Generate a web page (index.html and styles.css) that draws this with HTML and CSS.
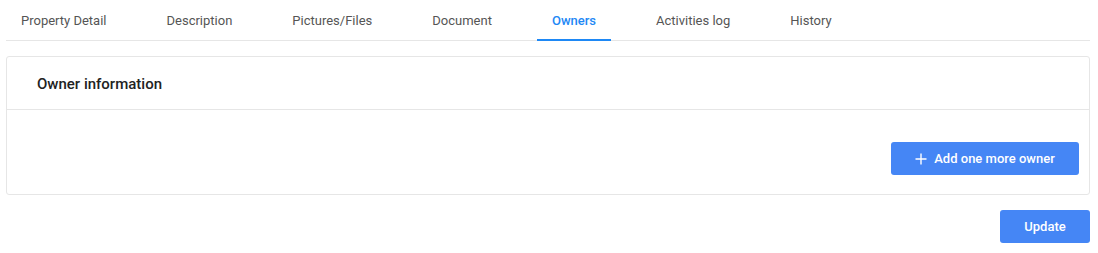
FILE: index.html
```html
<!DOCTYPE html>
<html>
<head>
<meta charset="utf-8">
<link rel="stylesheet" href="styles.css">
</head>
<body>
<div class="page">
  <nav class="tabs">
    <div class="tab">Property Detail</div>
    <div class="tab">Description</div>
    <div class="tab">Pictures/Files</div>
    <div class="tab">Document</div>
    <div class="tab active">Owners</div>
    <div class="tab">Activities log</div>
    <div class="tab">History</div>
  </nav>
  <section class="card">
    <div class="card-head">Owner information</div>
    <div class="card-body">
      <button class="btn btn-add"><svg class="plus" width="12" height="12" viewBox="0 0 12 12"><path d="M6 0.5V11.5M0.5 6H11.5" stroke="#fff" stroke-width="1.4" fill="none"/></svg>Add one more owner</button>
    </div>
  </section>
  <div class="actions">
    <button class="btn btn-update">Update</button>
  </div>
</div>
</body>
</html>
```
FILE: styles.css
```css
* { box-sizing: border-box; }
html, body { margin: 0; padding: 0; background: #fff; }
body { font-family: Roboto, "Noto Sans", Arial, sans-serif; }
.page { padding: 0 8px 0 6px; }
.tabs {
  display: flex;
  gap: 30px;
  height: 41px;
  border-bottom: 1px solid #e6e6e6;
}
.tab {
  padding: 1px 15px 0;
  height: 41px;
  line-height: 40px;
  font-size: 13px;
  color: #555;
  border-bottom: 2px solid transparent;
}
.tab.active {
  color: #1e88f5;
  font-weight: 500;
  border-bottom-color: #1e88f5;
}
.card {
  margin-top: 15px;
  border: 1px solid #e6e6e6;
  border-radius: 3px;
}
.card-head {
  height: 53px;
  padding: 1px 30px 0;
  display: flex;
  align-items: center;
  font-size: 15px;
  font-weight: 500;
  color: #222;
  border-bottom: 1px solid #e6e6e6;
}
.card-body {
  display: flex;
  justify-content: flex-end;
  padding: 32px 10px 19px;
}
.btn {
  border: none;
  border-radius: 3px;
  background: #4586f5;
  color: #fff;
  font-family: inherit;
  font-size: 13px;
  font-weight: 500;
  height: 33px;
  display: flex;
  align-items: center;
  justify-content: center;
}
.btn-add { width: 188px; gap: 7px; }
.plus { display: block; }
.actions {
  display: flex;
  justify-content: flex-end;
  margin-top: 15px;
}
.btn-update { width: 90px; }
```
